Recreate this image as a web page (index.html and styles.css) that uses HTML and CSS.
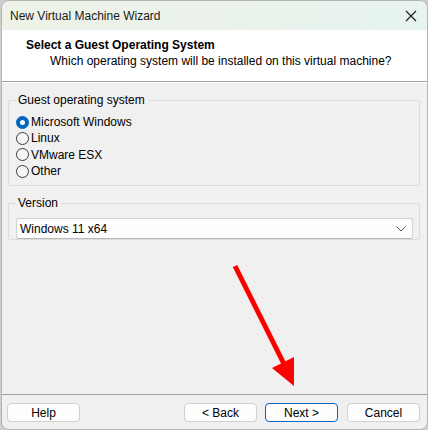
FILE: index.html
```html
<!DOCTYPE html>
<html lang="en">
	<head>
		<meta charset="utf-8">
		<title>New Virtual Machine Wizard</title>
		<link rel="stylesheet" href="styles.css">
	</head>
	<body>
		<div class="window">
			<div class="titlebar">
				<span class="caption">New Virtual Machine Wizard</span>
				<svg class="close" width="12" height="12" viewBox="0 0 12 12">
					<path d="M1 1 L11 11 M11 1 L1 11" stroke="#1a1a1a" stroke-width="1.1" fill="none"/>
				</svg>
			</div>
			<div class="header">
				<h1>Select a Guest Operating System</h1>
				<p>Which operating system will be installed on this virtual machine?</p>
			</div>
			<div class="content">
				<fieldset class="group os-group">
					<legend>Guest operating system</legend>
					<label class="radio"><span class="dot checked"></span>Microsoft Windows</label>
					<label class="radio"><span class="dot"></span>Linux</label>
					<label class="radio"><span class="dot"></span>VMware ESX</label>
					<label class="radio"><span class="dot"></span>Other</label>
				</fieldset>
				<fieldset class="group version-group">
					<legend>Version</legend>
					<div class="select">
						<span>Windows 11 x64</span>
						<svg width="10" height="6" viewBox="0 0 10 6">
							<path d="M0.5 0.5 L5 5 L9.5 0.5" stroke="#555" stroke-width="1" fill="none"/>
						</svg>
					</div>
				</fieldset>
			</div>
			<div class="footer">
				<button class="btn">Help</button>
				<div class="spacer"></div>
				<button class="btn">&lt; Back</button>
				<button class="btn default">Next &gt;</button>
				<button class="btn cancel">Cancel</button>
			</div>
			<!-- annotation arrow drawn over the dialog -->
			<svg class="arrow" width="428" height="430" viewBox="0 0 428 430">
				<line x1="235" y1="266" x2="287" y2="370" stroke="#ff0000" stroke-width="5"/>
				<polygon points="272,368 294,357 294,386" fill="#ff0000"/>
			</svg>
		</div>
	</body>
</html>
```

FILE: styles.css
```css
body {
	margin: 0;
	background-color: #cfcfcf;
	font-family: 'Segoe UI', 'Liberation Sans', sans-serif;
	font-size: 12px;
	line-height: 16px;
	color: #000;
}
.window {
	position: relative;
	box-sizing: border-box;
	width: 427px;
	height: 430px;
	margin-left: 1px;
	border: 1px solid #b4b4b4;
	border-radius: 8px;
	overflow: hidden;
	display: flex;
	flex-direction: column;
	background-color: #f0f0f0;
}
.titlebar {
	height: 29px;
	display: flex;
	align-items: center;
	justify-content: space-between;
	padding: 0 10px 0 8px;
	background: linear-gradient(90deg, #eef2e7 0%, #eaf2ea 50%, #e6f3ef 100%);
}
.caption {
	font-size: 12px;
	color: #1a1a1a;
}
.close {
	margin-top: 1px;
}
.header {
	height: 52px;
	box-sizing: border-box;
	background-color: #fff;
	border-bottom: 1px solid #a0a0a0;
	padding: 7px 0 0 24px;
}
.header h1 {
	margin: 0;
	font-size: 12px;
	line-height: 16px;
	font-weight: bold;
}
.header p {
	margin: 0 0 0 24px;
	color: #000;
}
.content {
	flex: 1;
	padding: 9px 7px 0 6px;
	border-top: 1px solid #fff;
}
.group {
	margin: 0;
	padding: 0 8px 0 7px;
	border: 1px solid #dcdcdc;
	border-radius: 2px;
}
.group legend {
	padding: 0 3px 0 2px;
	margin-left: 0;
}
.os-group {
	height: 94px;
	box-sizing: border-box;
	padding-top: 6px;
}
.radio {
	display: flex;
	align-items: center;
	height: 16.3px;
	gap: 2px;
}
.dot {
	box-sizing: border-box;
	width: 13px;
	height: 13px;
	border-radius: 50%;
	border: 1px solid #3b3b3b;
	background-color: #f5f5f5;
	position: relative;
}
.dot.checked {
	border-color: #0067c0;
	background-color: #0067c0;
}
.dot.checked::after {
	content: "";
	position: absolute;
	left: 3px;
	top: 3px;
	width: 5px;
	height: 5px;
	border-radius: 50%;
	background-color: #fff;
}
.version-group {
	margin-top: 9px;
	height: 45px;
	box-sizing: border-box;
	padding-top: 7px;
	padding-right: 6px;
}
.select {
	height: 21px;
	box-sizing: border-box;
	display: flex;
	align-items: center;
	justify-content: space-between;
	padding: 0 6px 0 3px;
	background-color: #fdfdfd;
	border: 1px solid #d2d2d2;
	border-bottom-color: #b8b8b8;
	border-radius: 3px;
}
.footer {
	height: 35px;
	box-sizing: border-box;
	border-top: 1px solid #a0a0a0;
	display: flex;
	align-items: center;
	padding: 0 7px 0 5px;
	gap: 8px;
}
.spacer {
	flex: 1;
}
.btn {
	width: 73px;
	height: 19px;
	padding: 0;
	font-family: inherit;
	font-size: 12px;
	color: #000;
	background-color: #fdfdfd;
	border: 1px solid #d0d0d0;
	border-radius: 4px;
	margin-top: 1px;
}
.btn.default {
	border-color: #0067c0;
}
.btn.cancel {
	margin-left: 1px;
}
.arrow {
	position: absolute;
	left: -2px;
	top: -1px;
	pointer-events: none;
}
```
